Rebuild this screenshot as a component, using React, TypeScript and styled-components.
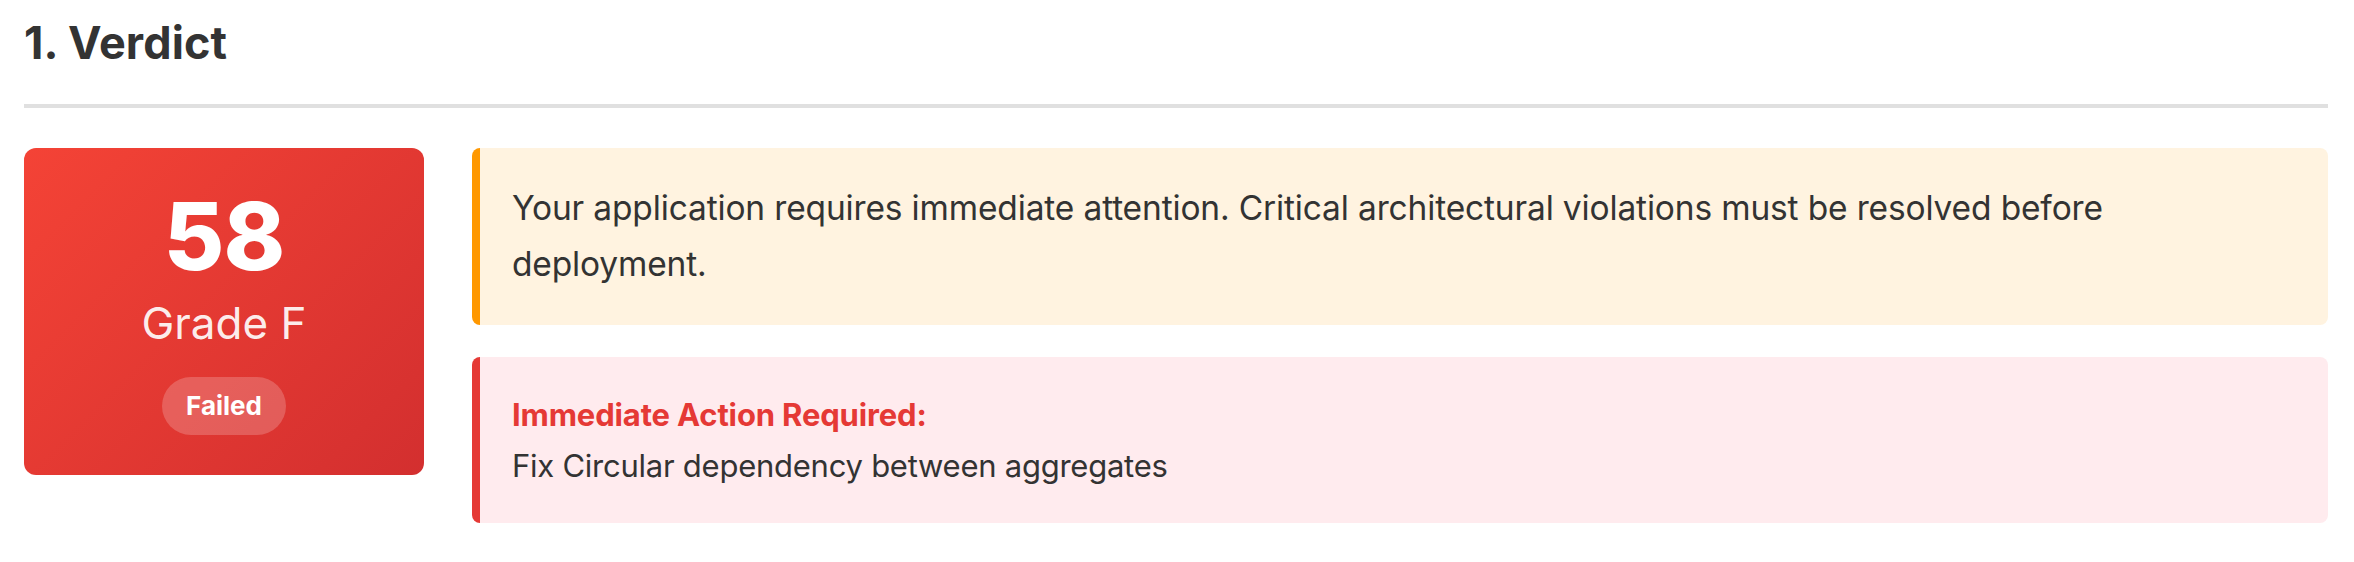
import React from 'react'
import styled, { createGlobalStyle } from 'styled-components'

const GlobalStyle = createGlobalStyle`
  html, body {
    margin: 0;
    padding: 0;
    background: #ffffff;
  }
  body {
    font-family: Inter, "Noto Sans", "Liberation Sans", sans-serif;
    color: #333333;
  }
`

const Page = styled.div`
  padding: 7px 26px 0 24px;
  box-sizing: border-box;
  width: 2354px;
`

const SectionTitle = styled.h2`
  margin: 0 0 40px 0;
  padding: 0 0 25px 0;
  font-size: 45px;
  line-height: 72px;
  font-weight: 700;
  letter-spacing: 0.1px;
  color: #333333;
  border-bottom: 4px solid #e0e0e0;
`

const VerdictGrid = styled.div`
  display: grid;
  grid-template-columns: 400px 1fr;
  column-gap: 48px;
  align-items: start;
`

const ScoreCard = styled.div`
  display: flex;
  flex-direction: column;
  align-items: center;
  padding: 40px 0;
  border-radius: 12px;
  background: linear-gradient(135deg, #f44336 0%, #d32f2f 100%);
  color: #ffffff;
`

const Score = styled.div`
  font-size: 93px;
  line-height: 96px;
  font-weight: 800;
  letter-spacing: -1px;
`

const Grade = styled.div`
  margin-top: 4px;
  font-size: 44px;
  line-height: 70px;
  font-weight: 400;
  color: rgba(255, 255, 255, 0.92);
`

const StatusBadge = styled.span`
  margin-top: 19px;
  padding: 8px 24px;
  border-radius: 999px;
  background: rgba(255, 255, 255, 0.2);
  font-size: 26px;
  line-height: 42px;
  font-weight: 700;
`

const Messages = styled.div`
  display: flex;
  flex-direction: column;
  gap: 32px;
`

const Callout = styled.div<{ $tone: 'warning' | 'danger' }>`
  padding: 32px 100px 32px 32px;
  border-radius: 8px;
  border-left: 8px solid ${p => (p.$tone === 'warning' ? '#ff9800' : '#e53935')};
  background: ${p => (p.$tone === 'warning' ? '#fff3e0' : '#ffebee')};
`

const WarningText = styled.p`
  margin: 0;
  font-size: 33.5px;
  line-height: 56.3px;
  letter-spacing: -0.15px;
  color: #333333;
`

const ActionTitle = styled.div`
  font-size: 31px;
  line-height: 51.2px;
  font-weight: 700;
  letter-spacing: -0.15px;
  color: #e53935;
`

const ActionText = styled.div`
  font-size: 31px;
  line-height: 51.2px;
  letter-spacing: -0.25px;
  color: #333333;
`

export default function App() {
  return (
    <Page>
      <GlobalStyle />
      <SectionTitle>1. Verdict</SectionTitle>
      <VerdictGrid>
        <ScoreCard>
          <Score>58</Score>
          <Grade>Grade F</Grade>
          <StatusBadge>Failed</StatusBadge>
        </ScoreCard>
        <Messages>
          <Callout $tone="warning">
            <WarningText>
              Your application requires immediate attention. Critical architectural violations must be resolved
              before deployment.
            </WarningText>
          </Callout>
          <Callout $tone="danger">
            <ActionTitle>Immediate Action Required:</ActionTitle>
            <ActionText>Fix Circular dependency between aggregates</ActionText>
          </Callout>
        </Messages>
      </VerdictGrid>
    </Page>
  )
}
